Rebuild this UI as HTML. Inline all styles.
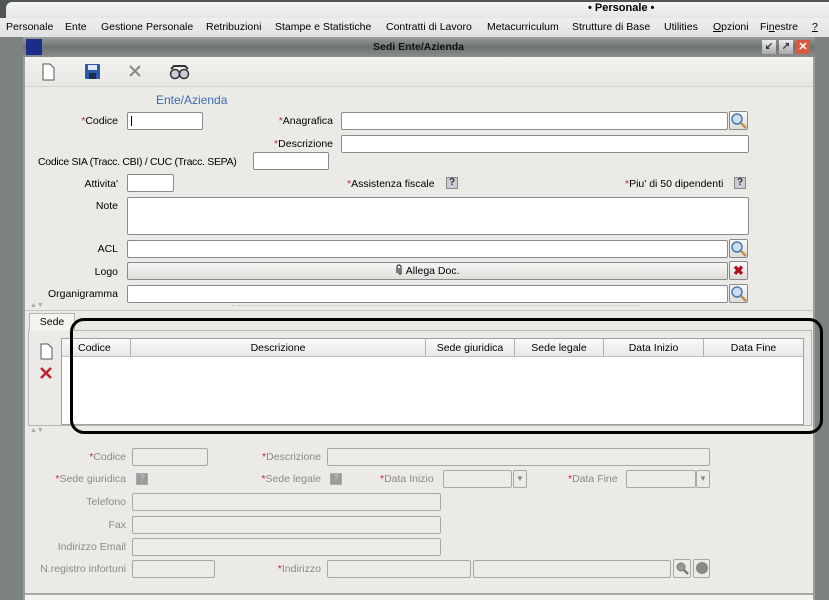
<!DOCTYPE html>
<html><head><meta charset="utf-8"><style>
*{box-sizing:border-box;margin:0;padding:0}
body{width:829px;height:600px;overflow:hidden;background:#7d8382;font-family:"Liberation Sans",sans-serif;font-size:10.5px;color:#000;position:relative}
.a{position:absolute}
.m{position:absolute;top:21px;white-space:nowrap}
.inp{position:absolute;background:#fff;border:1px solid #8a8a8a;border-radius:2px;height:18px}
.dis{position:absolute;background:#ecebe7;border:1px solid #a8a8a4;border-radius:2px;height:18px}
.lbl{position:absolute;text-align:right;white-space:nowrap}
.g{color:#8a8a8a}
.r{color:#c0283c}
.sb{position:absolute;width:19px;height:19px;border:1px solid #8a8a8a;border-radius:2px;background:linear-gradient(#fafafa,#dcdcdc)}
.q{position:absolute;width:12px;height:12px;background:#c8ccd4;border:1px solid #888;font-size:10px;font-weight:bold;text-align:center;line-height:10px;color:#333}
.qg{background:#9a9a9a;border-color:#aaa;color:#bbb}
.th{position:absolute;top:0;height:18px;border-right:1px solid #b0b0b0;text-align:center;line-height:18px}
</style></head><body>
<div class="a" style="left:0;top:0;width:829px;height:18px;background:#505654"></div>
<div class="a" style="left:6px;top:2px;width:830px;height:18px;background:linear-gradient(#f4f4f4,#e4e4e4);border-top-left-radius:6px"></div>
<div class="a" style="left:588px;top:2px;font-weight:bold;font-size:11px">• Personale •</div>
<div class="a" style="left:0;top:18px;width:829px;height:19px;background:linear-gradient(#eeeeee,#e2e2e2);"></div>
<div class="m" style="left:6px">Personale</div>
<div class="m" style="left:65px">Ente</div>
<div class="m" style="left:101px">Gestione Personale</div>
<div class="m" style="left:206px">Retribuzioni</div>
<div class="m" style="left:275px">Stampe e Statistiche</div>
<div class="m" style="left:386px">Contratti di Lavoro</div>
<div class="m" style="left:487px">Metacurriculum</div>
<div class="m" style="left:572px">Strutture di Base</div>
<div class="m" style="left:664px">Utilities</div>
<div class="m" style="left:713px"><u>O</u>pzioni</div>
<div class="m" style="left:760px">Fi<u>n</u>estre</div>
<div class="m" style="left:812px"><u>?</u></div>
<div class="a" style="left:23px;top:37px;width:792px;height:20px;background:linear-gradient(#9a9e9c,#6e7472 50%,#8a8e8c)"></div>
<div class="a" style="left:26px;top:39px;width:16px;height:16px;background:#1c2c8c"></div>
<div class="a" style="left:0;top:41px;width:829px;text-align:center;font-weight:bold;color:#111;padding-left:8px">Sedi Ente/Azienda</div>
<div class="a" style="left:762px;top:40px;width:14px;height:14px;background:linear-gradient(#eee,#aaa);font-size:10px;text-align:center;line-height:14px;font-weight:bold;color:#334">↙</div>
<div class="a" style="left:779px;top:40px;width:14px;height:14px;background:linear-gradient(#eee,#aaa);font-size:10px;text-align:center;line-height:14px;font-weight:bold;color:#334">↗</div>
<div class="a" style="left:796px;top:40px;width:14px;height:14px;background:#d85a40;font-size:11px;text-align:center;line-height:14px;font-weight:bold;color:#fff">✕</div>
<div class="a" style="left:23px;top:57px;width:792px;height:543px;background:#eceae6;border-left:2px solid #9a9e9c;border-right:2px solid #9a9e9c"></div>
<div class="a" style="left:25px;top:57px;width:788px;height:30px;background:linear-gradient(#f3f2ef,#e9e7e3);border-bottom:1px solid #d4d2ce"></div>
<svg class="a" style="left:40px;top:62px" width="170" height="20">
<path d="M3 2h7l4 4v12H3z" fill="#fff" stroke="#555"/>
<rect x="45" y="2" width="15" height="15" rx="1" fill="#2a5aa8"/><rect x="48" y="3" width="9" height="5" fill="#dfe8f5"/><rect x="49" y="11" width="7" height="6" fill="#1a2a50"/>
<path d="M90 4l10 10M100 4L90 14" stroke="#888" stroke-width="2"/>
<circle cx="135" cy="12" r="4.5" fill="#ccd" stroke="#333" stroke-width="1.5"/><circle cx="144" cy="12" r="4.5" fill="#ccd" stroke="#333" stroke-width="1.5"/><path d="M131 7l3-3h11l3 3" stroke="#333" stroke-width="2" fill="none"/>
</svg>
<div class="a" style="left:156px;top:93px;color:#3a6ab0;font-size:12px">Ente/Azienda</div>
<div class="lbl" style="right:711px;top:115px"><span class="r">*</span>Codice</div>
<div class="inp" style="left:127px;top:112px;width:76px"><div style="position:absolute;left:3px;top:3px;width:1px;height:10px;background:#000"></div></div>
<div class="lbl" style="right:496px;top:115px"><span class="r">*</span>Anagrafica</div>
<div class="inp" style="left:341px;top:112px;width:387px"></div>
<div class="sb" style="left:729px;top:111px"></div>
<div class="lbl" style="right:496px;top:138px"><span class="r">*</span>Descrizione</div>
<div class="inp" style="left:341px;top:135px;width:408px"></div>
<div class="lbl" style="left:38px;top:156px;letter-spacing:-0.3px">Codice SIA (Tracc. CBI) / CUC (Tracc. SEPA)</div>
<div class="inp" style="left:253px;top:152px;width:76px"></div>
<div class="lbl" style="right:711px;top:178px">Attivita'</div>
<div class="inp" style="left:127px;top:174px;width:47px"></div>
<div class="lbl" style="left:347px;top:178px"><span class="r">*</span>Assistenza fiscale</div>
<div class="q" style="left:446px;top:177px">?</div>
<div class="lbl" style="left:625px;top:178px"><span class="r">*</span>Piu' di 50 dipendenti</div>
<div class="q" style="left:734px;top:177px">?</div>
<div class="lbl" style="right:711px;top:200px">Note</div>
<div class="inp" style="left:127px;top:197px;width:622px;height:38px"></div>
<div class="lbl" style="right:711px;top:243px">ACL</div>
<div class="inp" style="left:127px;top:240px;width:601px"></div>
<div class="sb" style="left:729px;top:239px"></div>
<div class="lbl" style="right:711px;top:266px">Logo</div>
<div class="inp" style="left:127px;top:262px;width:601px;background:linear-gradient(#f6f6f4,#e0dfdc);text-align:center;line-height:16px"><svg width="8" height="11" style="vertical-align:-1px"><path d="M2 9V3a2 2 0 014 0v6a1 1 0 01-2 0V4" stroke="#333" stroke-width="1.2" fill="none"/></svg> Allega Doc.</div>
<div class="sb" style="left:729px;top:261px;color:#b01020;font-weight:bold;text-align:center;line-height:17px;font-size:13px">✖</div>
<div class="lbl" style="right:711px;top:288px">Organigramma</div>
<div class="inp" style="left:127px;top:285px;width:601px"></div>
<div class="sb" style="left:729px;top:284px"></div>
<svg class="a" style="left:729px;top:111px" width="20" height="200">
<g id="m"><circle cx="8" cy="8" r="5" fill="#cde" stroke="#4a7ab0" stroke-width="1.5"/><path d="M12 12l5 5" stroke="#c09040" stroke-width="2.5"/></g>
<use href="#m" y="128"/><use href="#m" y="173"/></svg>
<div class="a" style="left:30px;top:302px;font-size:7px;color:#aaa">▲▼</div>
<div class="a" style="left:232px;top:305px;width:408px;border-top:1px dotted #bbb"></div>
<div class="a" style="left:25px;top:310px;width:788px;border-top:1px solid #c8c6c2"></div>
<div class="a" style="left:28px;top:330px;width:784px;height:96px;border:1px solid #b8b6b2;background:#eceae6"></div>
<div class="a" style="left:29px;top:313px;width:46px;height:18px;border:1px solid #b8b6b2;border-bottom:none;background:#f4f3f0;text-align:center;line-height:17px">Sede</div>
<div class="a" style="left:61px;top:338px;width:743px;height:87px;background:#fff;border:1px solid #a0a0a0"></div>
<div class="a" style="left:62px;top:339px;width:741px;height:18px;background:linear-gradient(#fafafa,#e8e8e8);border-bottom:1px solid #c0c0c0">
<div class="th" style="left:0;width:69px;text-align:left;padding-left:16px">Codice</div>
<div class="th" style="left:69px;width:295px">Descrizione</div>
<div class="th" style="left:364px;width:89px">Sede giuridica</div>
<div class="th" style="left:453px;width:89px">Sede legale</div>
<div class="th" style="left:542px;width:100px">Data Inizio</div>
<div class="th" style="left:642px;width:99px;border:none">Data Fine</div></div>
<svg class="a" style="left:38px;top:342px" width="18" height="40"><path d="M3 2h7l4 4v11H3z" fill="#fff" stroke="#555"/><path d="M3 26l10 10M13 26L3 36" stroke="#c02030" stroke-width="2.5"/></svg>
<div class="a" style="left:70px;top:318px;width:753px;height:116px;border:3px solid #000;border-radius:14px"></div>
<div class="a" style="left:30px;top:427px;font-size:7px;color:#aaa">▲▼</div>
<div class="lbl g" style="right:703px;top:451px"><span class="r">*</span>Codice</div>
<div class="dis" style="left:132px;top:448px;width:76px"></div>
<div class="lbl g" style="right:508px;top:451px"><span class="r">*</span>Descrizione</div>
<div class="dis" style="left:327px;top:448px;width:383px"></div>
<div class="lbl g" style="right:703px;top:473px"><span class="r">*</span>Sede giuridica</div>
<div class="q qg" style="left:136px;top:473px">?</div>
<div class="lbl g" style="right:508px;top:473px"><span class="r">*</span>Sede legale</div>
<div class="q qg" style="left:330px;top:473px">?</div>
<div class="lbl g" style="left:380px;top:473px"><span class="r">*</span>Data Inizio</div>
<div class="dis" style="left:443px;top:470px;width:69px"></div>
<div class="dis" style="left:513px;top:470px;width:14px;font-size:8px;text-align:center;line-height:16px;color:#888">▼</div>
<div class="lbl g" style="left:568px;top:473px"><span class="r">*</span>Data Fine</div>
<div class="dis" style="left:626px;top:470px;width:70px"></div>
<div class="dis" style="left:696px;top:470px;width:14px;font-size:8px;text-align:center;line-height:16px;color:#888">▼</div>
<div class="lbl g" style="right:703px;top:496px">Telefono</div>
<div class="dis" style="left:132px;top:493px;width:309px"></div>
<div class="lbl g" style="right:703px;top:519px">Fax</div>
<div class="dis" style="left:132px;top:516px;width:309px"></div>
<div class="lbl g" style="right:703px;top:541px">Indirizzo Email</div>
<div class="dis" style="left:132px;top:538px;width:309px"></div>
<div class="lbl g" style="right:703px;top:563px">N.registro infortuni</div>
<div class="dis" style="left:132px;top:560px;width:83px"></div>
<div class="lbl g" style="right:508px;top:563px"><span class="r">*</span>Indirizzo</div>
<div class="dis" style="left:327px;top:560px;width:144px"></div>
<div class="dis" style="left:473px;top:560px;width:198px"></div>
<div class="dis" style="left:673px;top:559px;width:18px;height:19px"><svg width="16" height="17"><circle cx="7" cy="7" r="4" fill="#999" stroke="#777"/><path d="M10 10l4 4" stroke="#777" stroke-width="2.5"/></svg></div>
<div class="dis" style="left:693px;top:559px;width:17px;height:19px"><div style="margin:2px;width:12px;height:12px;border-radius:50%;background:#888"></div></div>
<div class="a" style="left:25px;top:593px;width:788px;border-top:2px solid #a8a8a4"></div>
<div class="a" style="left:25px;top:595px;width:788px;height:5px;background:#f4f3f0"></div>
</body></html>
